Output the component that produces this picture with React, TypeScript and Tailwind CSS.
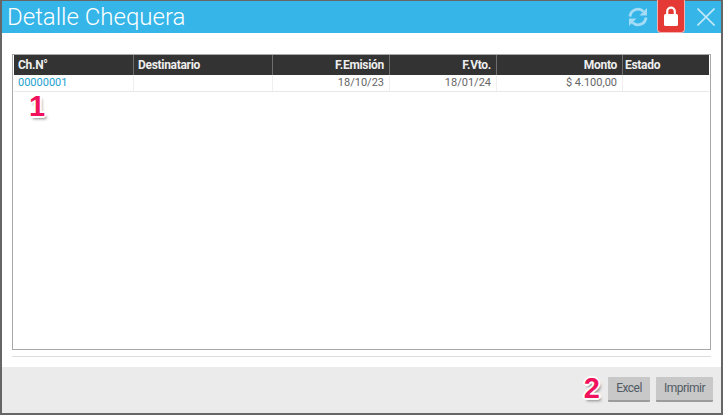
import React from "react";

const columns = [
  { label: "Ch.N°", width: "w-[120px]", align: "text-left pl-[4px]" },
  { label: "Destinatario", width: "w-[139px]", align: "text-left pl-[4px]" },
  { label: "F.Emisión", width: "w-[117px]", align: "text-right pr-[5px]" },
  { label: "F.Vto.", width: "w-[107px]", align: "text-right pr-[5px]" },
  { label: "Monto", width: "w-[126px]", align: "text-right pr-[5px]" },
  { label: "Estado", width: "flex-1", align: "text-left pl-[2px]" },
];

const cells = ["00000001", "", "18/10/23", "18/01/24", "$ 4.100,00", ""];

const Marker: React.FC<{ value: string }> = ({ value }) => (
  <span className="text-[29px] leading-none font-bold text-[#f0125c] [font-family:'Liberation_Sans',sans-serif] [text-shadow:-1px_-1px_0_#fff,1px_-1px_0_#fff,-1px_1px_0_#fff,1px_1px_0_#fff,2px_0_0_#fff,-2px_0_0_#fff,0_2px_0_#fff,0_-2px_0_#fff,2px_3px_3px_#888]">
    {value}
  </span>
);

export default function App() {
  return (
    <div className="w-[723px] h-[415px] overflow-hidden bg-[#666666] pt-px pb-[2px] px-[2px] flex flex-col [font-family:Roboto,sans-serif]">
      <header className="h-[32px] flex-none bg-[#35b5e8] flex items-center justify-between">
        <h1 className="ml-[5px] text-[24px] leading-[32px] font-light text-white">Detalle Chequera</h1>
        <div className="flex items-start h-full">
          <svg width="20" height="20" viewBox="0 0 20 20" fill="none" className="mt-[6px] mr-[9px] text-[#a4dcf5]" stroke="currentColor" strokeWidth="2.8">
            <path d="M2 9.5 A8 8 0 0 1 15.5 4.5" />
            <path d="M18 10.5 A8 8 0 0 1 4.5 15.5" />
            <path d="M19 1 V8.5 H11.5 Z" fill="currentColor" stroke="none" />
            <path d="M1 19 V11.5 H8.5 Z" fill="currentColor" stroke="none" />
          </svg>
          <div className="w-[28px] h-[33px] -mt-px bg-[#e53935] rounded-b-[4px] border-x border-b border-[#f3b0ae] flex items-center justify-center">
            <svg width="14" height="20" viewBox="0 0 14 20" className="text-white">
              <path d="M3.2 9 V5.5 A3.8 3.8 0 0 1 10.8 5.5 V9" fill="none" stroke="currentColor" strokeWidth="2.2" />
              <rect x="0" y="8" width="14" height="12" rx="1.5" fill="currentColor" />
            </svg>
          </div>
          <svg width="18" height="18" viewBox="0 0 18 18" className="mt-[7px] ml-[12px] mr-[6px] text-[#c3e9f9]" stroke="currentColor" strokeWidth="1.6">
            <path d="M0.5 0.5 L17.5 17.5 M17.5 0.5 L0.5 17.5" />
          </svg>
        </div>
      </header>

      <main className="flex-1 bg-white flex flex-col px-[10px] pt-[21px] relative min-h-0">
        <div className="h-[296px] flex-none border border-[#a8a8a8] px-px">
          <div className="h-[20px] bg-[#333333] flex text-[12px] font-bold leading-[20px] tracking-[-0.3px] text-[#eeeeee]">
            {columns.map((c) => (
              <div key={c.label} className={`${c.width} ${c.align} border-r border-[#6e6e6e] last:border-r-0`}>
                {c.label}
              </div>
            ))}
          </div>
          <div className="h-[17px] flex border-b border-[#e8e8e8] text-[11px] leading-[16px] text-[#666666]">
            {columns.map((c, i) => (
              <div key={c.label} className={`${c.width} ${c.align} border-r border-[#eeeeee] last:border-r-0 ${i === 0 ? "text-[#1c9fd0]" : ""}`}>
                {cells[i]}
              </div>
            ))}
          </div>
        </div>
        <div className="mt-[6px] h-px bg-[#dddddd]" />
        <div className="absolute left-[27px] top-[59px]">
          <Marker value="1" />
        </div>
      </main>

      <footer className="h-[46px] flex-none bg-[#ebebeb] flex items-center justify-end gap-[6px] pr-[8px] pb-[2px]">
        <div className="mr-[2px] mt-px">
          <Marker value="2" />
        </div>
        <button className="w-[42px] h-[25px] bg-[#c8c8c8] rounded-[1px] border-b-2 border-[#9c9c9c] text-[12px] tracking-[-0.5px] text-[#505a64]">Excel</button>
        <button className="w-[57px] h-[25px] bg-[#c8c8c8] rounded-[1px] border-b-2 border-[#9c9c9c] text-[12px] tracking-[-0.5px] text-[#505a64]">Imprimir</button>
      </footer>
    </div>
  );
}
